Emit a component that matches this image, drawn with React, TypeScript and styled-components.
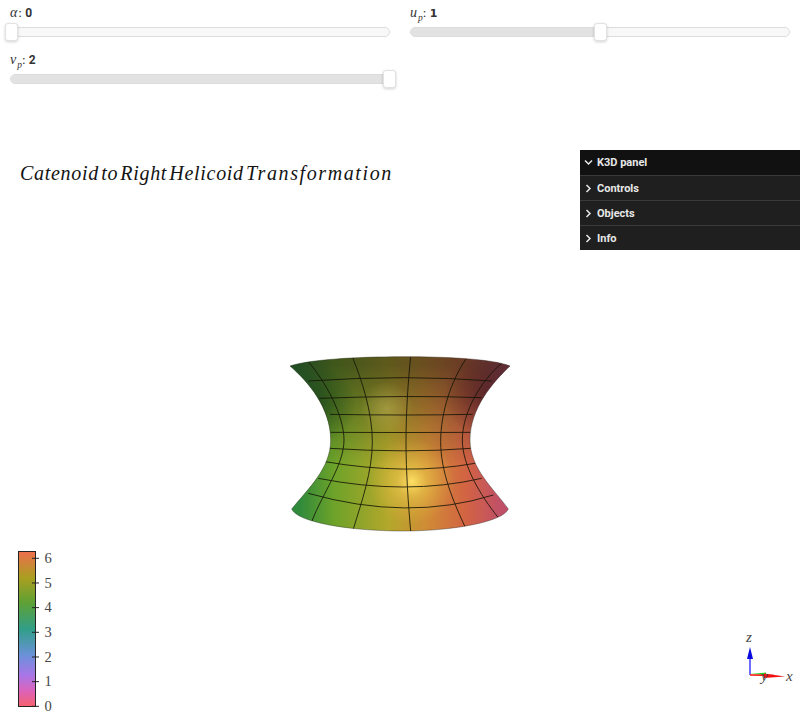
import styled, { createGlobalStyle } from 'styled-components';

const HORIZONTALS = [
  'M85 108 Q380 88 635 108',
  'M118 160 Q380 150 605 158',
  'M150 208 Q380 212 578 208',
  'M152 262 Q380 263 572 262',
  'M150 310 Q380 325 572 310',
  'M135 350 Q380 392 585 355',
  'M115 400 Q380 452 605 400',
  'M85 445 Q385 530 640 450',
];

const VERTICALS = [
  'M85 50 C135 108 192 210 192 285 C192 360 130 440 95 530',
  'M218 38 C245 105 277 200 277 290 C277 380 245 470 220 552',
  'M392 35 C385 100 378 200 378 290 C378 380 385 480 392 558',
  'M558 42 C515 105 482 200 482 290 C482 380 520 470 555 545',
  'M665 55 C605 105 547 200 547 285 C547 360 600 450 655 518',
];

const OUTLINE =
  'M30 63 C80 45 220 35 370 35 C500 35 640 42 690 63 C640 110 570 190 570 285 C570 370 640 430 685 492 C670 530 520 558 370 558 C200 558 50 530 35 492 C85 430 152 370 152 285 C152 190 85 110 30 63 Z';

const BAR_TICKS = [6, 5, 4, 3, 2, 1, 0];

const Slider = ({ value }: { value: number }) => (
  <Track>
    <Fill $value={value} />
    <Handle $value={value} />
  </Track>
);

const Chevron = ({ open }: { open?: boolean }) => (
  <ChevronSvg viewBox="0 0 9 9">
    <polyline points={open ? '1,2.5 4.5,6 8,2.5' : '2.5,1 6,4.5 2.5,8'} />
  </ChevronSvg>
);

const Surface = () => (
  <SurfaceSvg viewBox="0 0 720 585">
    <defs>
      <linearGradient id="hue" x1="0" x2="1" y1="0" y2="0">
        <stop offset="0.04" stopColor="#2f8a3c" />
        <stop offset="0.2" stopColor="#6ea32a" />
        <stop offset="0.45" stopColor="#b4a82c" />
        <stop offset="0.62" stopColor="#d08c36" />
        <stop offset="0.8" stopColor="#d26444" />
        <stop offset="0.96" stopColor="#c05068" />
      </linearGradient>
      <linearGradient id="shade" x1="0" x2="0" y1="0" y2="1">
        <stop offset="0.05" stopColor="#1a1a10" stopOpacity="0.55" />
        <stop offset="0.4" stopColor="#1a1a10" stopOpacity="0.2" />
        <stop offset="0.62" stopColor="#1a1a10" stopOpacity="0" />
      </linearGradient>
      <radialGradient id="rim" gradientUnits="userSpaceOnUse" cx="620" cy="150" r="130">
        <stop offset="0" stopColor="#200010" stopOpacity="0.4" />
        <stop offset="1" stopColor="#200010" stopOpacity="0" />
      </radialGradient>
      <radialGradient id="rimLeft" gradientUnits="userSpaceOnUse" cx="110" cy="180" r="120">
        <stop offset="0" stopColor="#042a14" stopOpacity="0.45" />
        <stop offset="1" stopColor="#042a14" stopOpacity="0" />
      </radialGradient>
      <radialGradient id="glow" gradientUnits="userSpaceOnUse" cx="395" cy="410" r="130">
        <stop offset="0" stopColor="#ffe066" stopOpacity="1" />
        <stop offset="0.35" stopColor="#f0cc50" stopOpacity="0.55" />
        <stop offset="1" stopColor="#e0b040" stopOpacity="0" />
      </radialGradient>
      <radialGradient id="sheen" gradientUnits="userSpaceOnUse" cx="320" cy="190" r="80">
        <stop offset="0" stopColor="#d8c870" stopOpacity="0.35" />
        <stop offset="1" stopColor="#d8c870" stopOpacity="0" />
      </radialGradient>
      <clipPath id="body">
        <path d={OUTLINE} />
      </clipPath>
    </defs>
    <path d={OUTLINE} fill="url(#hue)" />
    <path d={OUTLINE} fill="url(#shade)" />
    <path d={OUTLINE} fill="url(#rim)" />
    <path d={OUTLINE} fill="url(#rimLeft)" />
    <path d={OUTLINE} fill="url(#sheen)" />
    <path d={OUTLINE} fill="url(#glow)" />
    <g fill="none" stroke="#141408" strokeWidth="2.8" opacity="0.9" clipPath="url(#body)">
      {HORIZONTALS.map((d) => (
        <path key={d} d={d} />
      ))}
      {VERTICALS.map((d) => (
        <path key={d} d={d} />
      ))}
    </g>
    <path d={OUTLINE} fill="none" stroke="#20201a" strokeWidth="1.6" opacity="0.7" />
  </SurfaceSvg>
);

const ColorBar = () => (
  <BarSvg viewBox="0 0 60 166">
    <defs>
      <linearGradient id="bar" x1="0" x2="0" y1="0" y2="1">
        <stop offset="0" stopColor="#ef6d4c" />
        <stop offset="0.17" stopColor="#a99e1e" />
        <stop offset="0.33" stopColor="#5da032" />
        <stop offset="0.5" stopColor="#2e9d86" />
        <stop offset="0.67" stopColor="#6a90da" />
        <stop offset="0.8" stopColor="#a874e6" />
        <stop offset="0.9" stopColor="#dd62ba" />
        <stop offset="1" stopColor="#f6606a" />
      </linearGradient>
    </defs>
    <rect x="0.5" y="0.5" width="17" height="155" fill="url(#bar)" stroke="#222" strokeWidth="1" />
    {BAR_TICKS.map((tick, i) => {
      const y = 7.3 + i * 24.67;
      return (
        <g key={tick}>
          <line x1="14" x2="21" y1={y} y2={y} stroke="#222" strokeWidth="1" />
          <BarLabel x="26.5" y={y + 4.8}>
            {tick}
          </BarLabel>
        </g>
      );
    })}
  </BarSvg>
);

const Axes = () => (
  <AxesSvg viewBox="0 0 70 70">
    <line x1="20" x2="20" y1="50" y2="30" stroke="#4a4aff" strokeWidth="1.6" />
    <polygon points="20,22 17,34 23,34" fill="#0808e0" />
    <polygon points="20,49 36,47.5 36,50" fill="#20d020" />
    <line x1="20" x2="44" y1="50" y2="50.5" stroke="#ff1010" strokeWidth="1.6" />
    <polygon points="34,48.5 55,51.5 34,53" fill="#f01010" />
    <AxisLabel x="16" y="17">z</AxisLabel>
    <AxisLabel x="31" y="56">y</AxisLabel>
    <AxisLabel x="56" y="56">x</AxisLabel>
  </AxesSvg>
);

export default function App() {
  return (
    <>
      <GlobalStyle />
      <Controls>
        <Field>
          <Label>
            <MathVar>α</MathVar>: <Value>0</Value>
          </Label>
          <Slider value={0} />
        </Field>
        <Field>
          <Label>
            <MathVar>
              u<sub>p</sub>
            </MathVar>
            : <Value $footed>1</Value>
          </Label>
          <Slider value={50} />
        </Field>
        <Field>
          <Label>
            <MathVar>
              v<sub>p</sub>
            </MathVar>
            : <Value>2</Value>
          </Label>
          <Slider value={100} />
        </Field>
      </Controls>
      <Stage>
        <Title>
          Catenoid to Right Helicoid <WideWord>Transformation</WideWord>
        </Title>
        <Panel>
          <PanelHeader>
            <Chevron open />
            K3D panel
          </PanelHeader>
          <PanelRow>
            <Chevron />
            Controls
          </PanelRow>
          <PanelRow>
            <Chevron />
            Objects
          </PanelRow>
          <PanelRow>
            <Chevron />
            Info
          </PanelRow>
        </Panel>
        <Surface />
        <ColorBar />
        <Axes />
      </Stage>
    </>
  );
}

const GlobalStyle = createGlobalStyle`
  html, body {
    margin: 0;
    padding: 0;
    background: #ffffff;
    overflow: hidden;
  }
`;

const Controls = styled.div`
  display: grid;
  grid-template-columns: 380px 380px;
  column-gap: 20px;
  row-gap: 15px;
  padding: 5px 10px 0;
  height: 150px;
  box-sizing: border-box;
  align-content: start;
`;

const Field = styled.div`
  display: flex;
  flex-direction: column;
  gap: 7px;
`;

const Label = styled.div`
  height: 15px;
  font-family: 'Liberation Serif', serif;
  font-size: 13px;
  line-height: 15px;
  color: #333333;
  white-space: pre;
`;

const MathVar = styled.span`
  font-style: italic;
  font-size: 14px;
  letter-spacing: 1px;

  sub {
    font-size: 9.5px;
    line-height: 0;
    letter-spacing: 0;
  }
`;

const Value = styled.b<{ $footed?: boolean }>`
  font-family: ${(p) => (p.$footed ? "'DejaVu Sans'" : 'Roboto')}, sans-serif;
  font-size: ${(p) => (p.$footed ? '11px' : '12px')};
  font-weight: 700;
`;

const Track = styled.div`
  position: relative;
  height: 10px;
  box-sizing: border-box;
  border: 1px solid #dcdcdc;
  border-radius: 5px;
  background: #f8f8f8;
`;

const Fill = styled.div<{ $value: number }>`
  height: 100%;
  width: ${(p) => p.$value}%;
  border-radius: 4px;
  background: #e2e2e2;
`;

const Handle = styled.div<{ $value: number }>`
  position: absolute;
  top: -5px;
  left: calc(${(p) => p.$value}% - 6px);
  width: 13px;
  height: 18px;
  box-sizing: border-box;
  border: 1px solid #e2e2e2;
  border-radius: 3px;
  background: #ffffff;
  box-shadow: 0 1px 3px rgba(0, 0, 0, 0.18);
`;

const Stage = styled.div`
  position: relative;
  height: 575px;
  display: flex;
  justify-content: center;
  padding-top: 195px;
  box-sizing: border-box;
`;

const Title = styled.div`
  position: absolute;
  top: 11px;
  left: 20px;
  font-family: 'Liberation Serif', serif;
  font-style: italic;
  font-size: 20px;
  line-height: 24px;
  letter-spacing: 0.7px;
  word-spacing: -3.5px;
  color: #111111;
  white-space: nowrap;
  opacity: 0.99;
`;

const WideWord = styled.span`
  letter-spacing: 1.6px;
`;

const Panel = styled.div`
  position: absolute;
  top: 0;
  right: 0;
  width: 220px;
  font-family: Roboto, sans-serif;
  font-size: 11px;
  font-weight: 700;
  color: #e8e8e8;
`;

const PanelRow = styled.div`
  display: flex;
  align-items: center;
  gap: 4px;
  height: 25px;
  padding-left: 4px;
  box-sizing: border-box;
  background: #1f1f1f;
  border-top: 1px solid #3a3a3a;
`;

const PanelHeader = styled(PanelRow)`
  background: #111111;
  border-top: none;
`;

const ChevronSvg = styled.svg`
  width: 9px;
  height: 9px;

  polyline {
    fill: none;
    stroke: #e8e8e8;
    stroke-width: 1.5;
  }
`;

const SurfaceSvg = styled.svg`
  width: 240px;
  height: 195px;
`;

const BarSvg = styled.svg`
  position: absolute;
  left: 18px;
  top: 401px;
  width: 60px;
  height: 166px;
  opacity: 0.99;
`;

const BarLabel = styled.text`
  font-family: 'Liberation Serif', serif;
  font-size: 14.5px;
  fill: #444444;
`;

const AxesSvg = styled.svg`
  position: absolute;
  left: 730px;
  top: 475px;
  width: 70px;
  height: 70px;
  opacity: 0.99;
`;

const AxisLabel = styled.text`
  font-family: 'Liberation Serif', serif;
  font-style: italic;
  font-size: 15px;
  fill: #444444;
`;
